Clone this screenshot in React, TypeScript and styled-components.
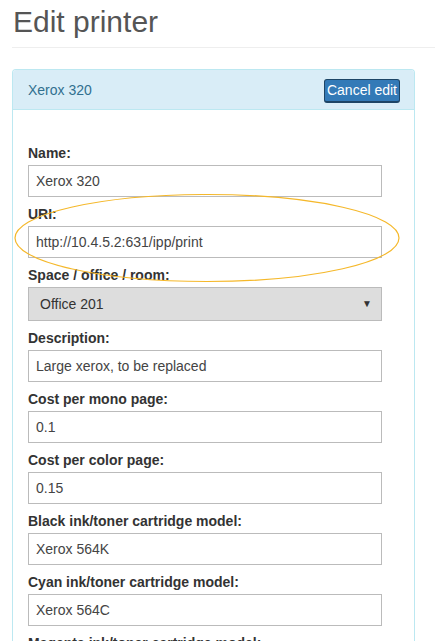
import React from "react";
import styled, { createGlobalStyle } from "styled-components";

const GlobalStyle = createGlobalStyle`
  html, body {
    margin: 0;
    padding: 0;
    background: #fff;
  }
  body {
    font-family: "Liberation Sans", Arial, sans-serif;
    font-size: 14px;
    color: #333;
  }
`;

const Page = styled.div`
  padding: 0 0 0 12px;
  overflow: hidden;
`;

const Title = styled.h1`
  margin: 0;
  padding: 3px 0 0 1px;
  font-size: 30px;
  font-weight: 400;
  line-height: 38px;
  color: #555;
`;

const Rule = styled.hr`
  margin: 6px 0 21px 0;
  border: 0;
  border-top: 1px solid #eee;
`;

const Panel = styled.div`
  width: 403px;
  box-sizing: border-box;
  border: 1px solid #bce8f1;
  border-radius: 4px 4px 0 0;
  border-bottom: 0;
`;

const PanelHeader = styled.div`
  display: flex;
  align-items: center;
  justify-content: space-between;
  height: 40px;
  box-sizing: border-box;
  padding: 1px 14px 0 15px;
  background: #d9edf7;
  border-bottom: 1px solid #bce8f1;
  border-radius: 3px 3px 0 0;
`;

const PanelTitle = styled.span`
  color: #31708f;
  font-size: 14px;
`;

const Button = styled.button`
  font-family: "Liberation Sans", Arial, sans-serif;
  font-size: 14px;
  color: #fff;
  background: #337ab7;
  border: 1px solid #1d4566;
  border-bottom-width: 2px;
  border-radius: 3px;
  height: 24px;
  width: 76px;
  padding: 0;
  margin-top: 1px;
`;

const PanelBody = styled.div`
  position: relative;
  padding: 33px 15px 0 15px;
`;

const Group = styled.div`
  margin-bottom: 7px;
`;

const Label = styled.label`
  display: block;
  font-weight: 700;
  font-size: 14px;
  line-height: 20px;
  margin-bottom: 2px;
  color: #333;
`;

const Input = styled.input`
  display: block;
  box-sizing: border-box;
  width: 354px;
  height: 32px;
  margin: 0;
  padding: 0 7px;
  border: 1px solid #bbb;
  border-radius: 0;
  font-family: "Liberation Sans", Arial, sans-serif;
  font-size: 14px;
  color: #444;
  background: #fff;
`;

const SelectWrap = styled.div`
  position: relative;
  width: 354px;
`;

const Select = styled.select`
  display: block;
  box-sizing: border-box;
  width: 354px;
  height: 34px;
  padding: 0 11px;
  border: 1px solid #bbb;
  border-radius: 0;
  background: #ddd;
  appearance: none;
  font-family: "Liberation Sans", Arial, sans-serif;
  font-size: 14px;
  color: #333;
`;

const Arrow = styled.span`
  position: absolute;
  right: 10px;
  top: 11px;
  font-size: 10px;
  color: #333;
  pointer-events: none;
`;

const Highlight = styled.svg`
  position: absolute;
  left: 1px;
  top: 84px;
  overflow: visible;
  pointer-events: none;
`;

const fields: Array<{ label: string; value: string }> = [
  { label: "Description:", value: "Large xerox, to be replaced" },
  { label: "Cost per mono page:", value: "0.1" },
  { label: "Cost per color page:", value: "0.15" },
  { label: "Black ink/toner cartridge model:", value: "Xerox 564K" },
  { label: "Cyan ink/toner cartridge model:", value: "Xerox 564C" },
  { label: "Magenta ink/toner cartridge model:", value: "Xerox 564M" },
];

export default function App() {
  return (
    <Page>
      <GlobalStyle />
      <Title>Edit printer</Title>
      <Rule />
      <Panel>
        <PanelHeader>
          <PanelTitle>Xerox 320</PanelTitle>
          <Button>Cancel edit</Button>
        </PanelHeader>
        <PanelBody>
          <Group>
            <Label>Name:</Label>
            <Input defaultValue="Xerox 320" />
          </Group>
          <Group>
            <Label>URI:</Label>
            <Input defaultValue="http://10.4.5.2:631/ipp/print" />
          </Group>
          <Group>
            <Label>Space / office / room:</Label>
            <SelectWrap>
              <Select defaultValue="201">
                <option value="201">Office 201</option>
              </Select>
              <Arrow>▼</Arrow>
            </SelectWrap>
          </Group>
          {fields.map((f) => (
            <Group key={f.label}>
              <Label>{f.label}</Label>
              <Input defaultValue={f.value} />
            </Group>
          ))}
          <Highlight width="386" height="88" viewBox="0 0 386 88">
            <ellipse cx="193" cy="44" rx="192" ry="43.5" fill="none" stroke="#f5b82a" strokeWidth="1.2" />
          </Highlight>
        </PanelBody>
      </Panel>
    </Page>
  );
}
